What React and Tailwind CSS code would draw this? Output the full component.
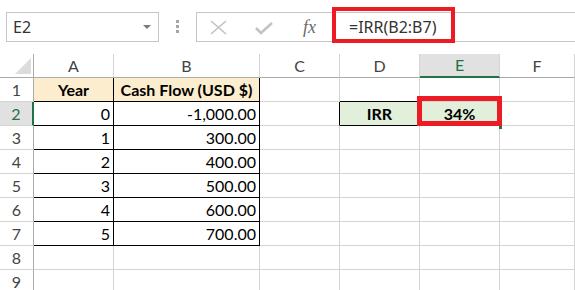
import React from "react";

const cols = ["A", "B", "C", "D", "E", "F"];

const data = [
  ["0", "-1,000.00"],
  ["1", "300.00"],
  ["2", "400.00"],
  ["3", "500.00"],
  ["4", "600.00"],
  ["5", "700.00"],
];

const grid = "border-r border-b border-[#d4d4d4]";
const black = "border-r border-b border-black";

const Cell = ({ className = "", children }) => (
  <div className={`h-[24px] flex items-end pb-[3px] px-[3px] leading-none text-[16px] text-black ${className}`}>
    {children}
  </div>
);

const RowHead = ({ n, active }) => (
  <div
    className={`h-[24px] flex items-end justify-center pb-[3px] leading-none text-[16px] border-b border-[#d4d4d4] ${
      active ? "bg-[#e1e1e1] text-[#217346] border-r-2 border-r-[#217346]" : "text-[#444] border-r border-r-[#ababab]"
    }`}
  >
    {n}
  </div>
);

export default function App() {
  return (
    <div className="w-[575px] h-[290px] overflow-hidden bg-white relative font-['Lato',sans-serif]">
      {/* formula bar */}
      <div className="h-[54px] pt-[12px] flex items-start font-['Noto_Sans',sans-serif]">
        <div className="ml-[6px] w-[153px] h-[30px] border border-[#c6c6c6] flex items-center justify-between pl-[6px] pr-[7px]">
          <span className="text-[16px] text-[#333] leading-none">E2</span>
          <svg width="8" height="4" viewBox="0 0 8 4">
            <polygon points="0,0 8,0 4,4" fill="#7a7a7a" />
          </svg>
        </div>
        <div className="ml-[17px] mt-[8px] flex flex-col gap-[2px]">
          <div className="w-[3px] h-[3px] bg-[#a6a6a6]" />
          <div className="w-[3px] h-[3px] bg-[#a6a6a6]" />
          <div className="w-[3px] h-[3px] bg-[#a6a6a6]" />
        </div>
        <div className="ml-[17px] flex-1 h-[30px] border-y border-l border-[#c6c6c6] flex items-center">
          <svg className="ml-[13px]" width="17" height="15" viewBox="0 0 17 15">
            <path d="M1 1 L16 14 M16 1 L1 14" stroke="#c2c2c2" strokeWidth="1.6" fill="none" />
          </svg>
          <svg className="ml-[28px] mt-[2px]" width="18" height="13" viewBox="0 0 18 13">
            <path d="M1 6 L6 11 L17 1" stroke="#c2c2c2" strokeWidth="2.6" fill="none" />
          </svg>
          <span className="ml-[30px] font-['Liberation_Serif',serif] italic text-[18px] text-[#6b6b6b] leading-none">
            fx
          </span>
          <span className="ml-[33px] text-[16px] text-[#333] leading-none">=IRR(B2:B7)</span>
        </div>
      </div>

      <div className="absolute left-[332px] top-[7px] w-[123px] h-[36px] border-[4px] border-[#ed1c24]" />

      {/* sheet */}
      <div className="relative grid grid-cols-[34px_80px_146px_80px_80px_80px_1fr]">
        <div className="h-[24px] border-r border-b border-[#ababab] relative">
          <svg className="absolute left-[15px] top-[4px]" width="16" height="16" viewBox="0 0 16 16">
            <polygon points="16,0 16,16 0,16" fill="#dcdcdc" />
          </svg>
        </div>
        {cols.map((c) => (
          <div
            key={c}
            className={`h-[24px] flex items-end justify-center pb-[3px] leading-none text-[16px] border-r border-[#d4d4d4] ${
              c === "E" ? "bg-[#e1e1e1] text-[#217346] border-b-2 border-b-[#217346]" : "text-[#444] border-b border-b-[#ababab]"
            }`}
          >
            {c}
          </div>
        ))}

        {/* row 1 */}
        <RowHead n="1" />
        <Cell className={`${black} bg-[#fdedcf] justify-center font-bold`}>Year</Cell>
        <Cell className={`${black} bg-[#fdedcf] justify-center font-bold`}>Cash Flow (USD $)</Cell>
        <Cell className={grid} />
        <Cell className="border-r border-[#d4d4d4] border-b border-b-black" />
        <Cell className={grid} />
        <Cell className={grid} />

        {data.map(([y, v], i) => {
          const r = i + 2;
          return (
            <React.Fragment key={r}>
              <RowHead n={r} active={r === 2} />
              <Cell className={`${black} justify-end`}>{y}</Cell>
              <Cell className={`${black} justify-end`}>{v}</Cell>
              <Cell className={r === 2 ? "border-r border-r-black border-b border-b-[#d4d4d4]" : grid} />
              <Cell className={r === 2 ? `${black} bg-[#e2efda] justify-center font-bold` : grid}>
                {r === 2 ? "IRR" : null}
              </Cell>
              <Cell className={r === 2 ? `${grid} bg-[#e2efda] justify-center font-bold` : grid}>
                {r === 2 ? "34%" : null}
              </Cell>
              <Cell className={grid} />
            </React.Fragment>
          );
        })}

        {[8, 9].map((r) => (
          <React.Fragment key={r}>
            <RowHead n={r} />
            <Cell className={grid} />
            <Cell className={grid} />
            <Cell className={grid} />
            <Cell className={grid} />
            <Cell className={grid} />
            <Cell className={grid} />
          </React.Fragment>
        ))}

        <div className="absolute left-[417px] top-[42px] w-[85px] h-[30px] border-[5px] border-[#ed1c24]" />
        <div className="absolute left-[499px] top-[72px] w-[3px] h-[3px] bg-[#217346]" />
      </div>
    </div>
  );
}
